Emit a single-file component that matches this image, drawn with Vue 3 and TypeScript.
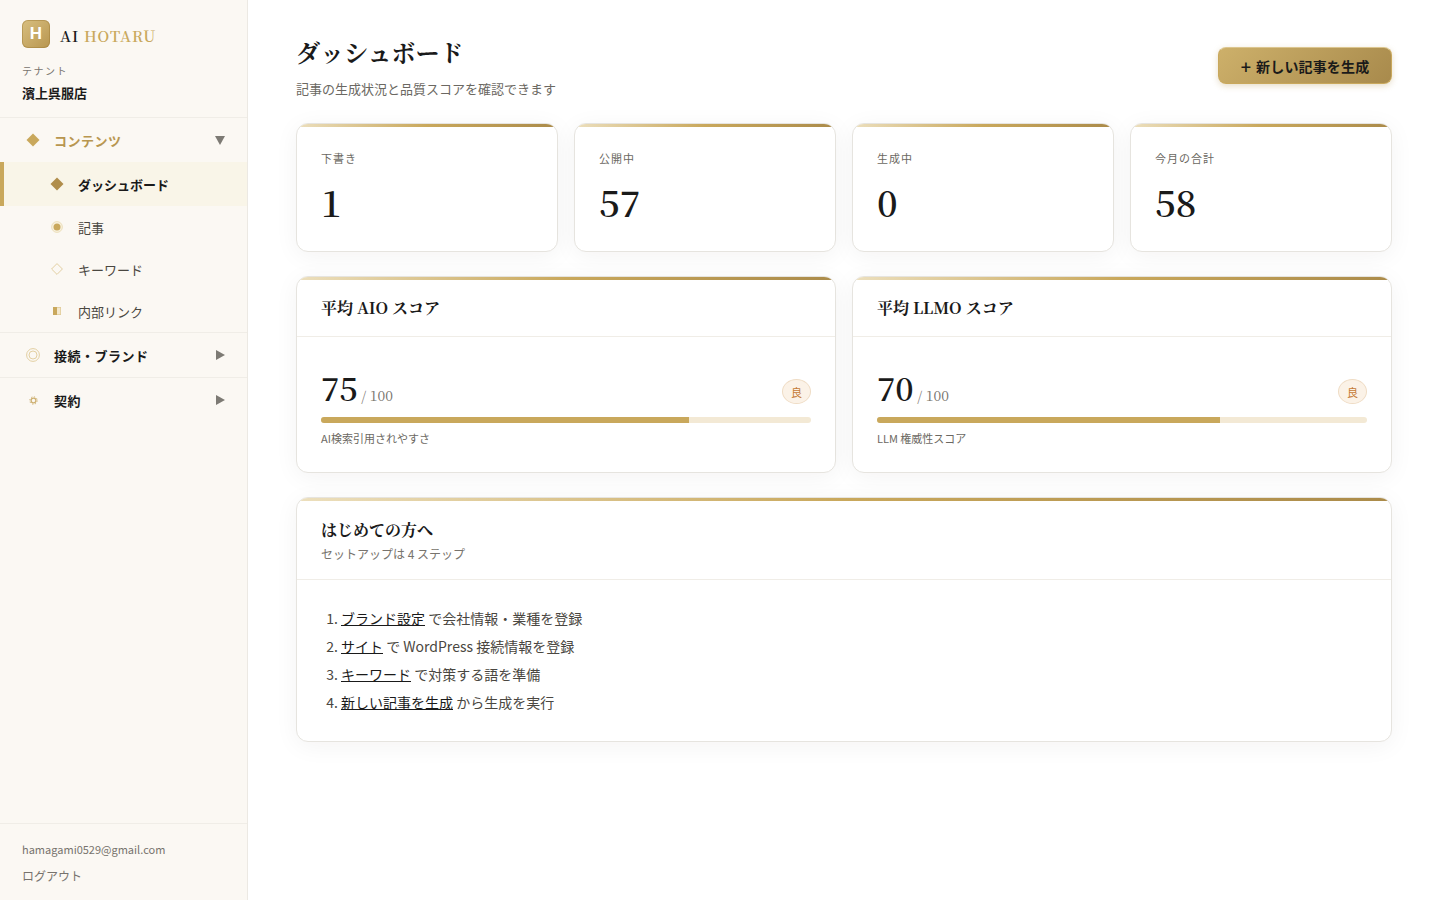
<script setup lang="ts">
const stats = [
  { label: '下書き', value: 1 },
  { label: '公開中', value: 57 },
  { label: '生成中', value: 0 },
  { label: '今月の合計', value: 58 },
]

const scores = [
  { title: '平均 AIO スコア', value: 75, note: 'AI検索引用されやすさ' },
  { title: '平均 LLMO スコア', value: 70, note: 'LLM 権威性スコア' },
]

const steps = [
  { link: 'ブランド設定', rest: ' で会社情報・業種を登録' },
  { link: 'サイト', rest: ' で WordPress 接続情報を登録' },
  { link: 'キーワード', rest: ' で対策する語を準備' },
  { link: '新しい記事を生成', rest: ' から生成を実行' },
]
</script>

<template>
  <div class="layout">
    <aside class="sidebar">
      <div class="brand-block">
        <div class="brand">
          <span class="logo">H</span>
          <span class="brand-name">AI <em>HOTARU</em></span>
        </div>
        <div class="tenant-label">テナント</div>
        <div class="tenant-name">濱上呉服店</div>
      </div>

      <nav class="nav">
        <section class="nav-group">
          <div class="group-head open">
            <span class="group-icon">
              <svg width="14" height="14" viewBox="0 0 14 14"><path d="M7 .5 13.5 7 7 13.5.5 7z" fill="#c9a85c" /></svg>
            </span>
            <span class="group-label">コンテンツ</span>
            <svg class="caret" width="10" height="9" viewBox="0 0 10 9"><path d="M0 0h10L5 9z" fill="#7d7a74" /></svg>
          </div>
          <a class="nav-item active">
            <span class="item-icon">
              <svg width="14" height="14" viewBox="0 0 14 14"><path d="M7 .5 13.5 7 7 13.5.5 7z" fill="#b08d4a" /></svg>
            </span>
            ダッシュボード
          </a>
          <a class="nav-item">
            <span class="item-icon">
              <svg width="12" height="12" viewBox="0 0 12 12"><circle cx="6" cy="6" r="5.4" fill="#f8f1de" stroke="#e8d9b0" stroke-width=".8" /><circle cx="6" cy="6" r="3.5" fill="#c9a85c" /></svg>
            </span>
            記事
          </a>
          <a class="nav-item">
            <span class="item-icon">
              <svg width="12" height="12" viewBox="0 0 12 12"><path d="M6 .6 11.4 6 6 11.4.6 6z" fill="none" stroke="#e0cb98" stroke-width=".9" /></svg>
            </span>
            キーワード
          </a>
          <a class="nav-item">
            <span class="item-icon">
              <svg width="8" height="8" viewBox="0 0 8 8"><rect x=".4" y=".4" width="7.2" height="7.2" fill="#f3e8cd" stroke="#e0cb98" stroke-width=".8" /><rect x="0" y="0" width="4" height="8" fill="#c9a85c" /></svg>
            </span>
            内部リンク
          </a>
        </section>

        <section class="nav-group">
          <div class="group-head">
            <span class="group-icon">
              <svg width="14" height="14" viewBox="0 0 14 14"><circle cx="7" cy="7" r="6.4" fill="none" stroke="#e0cb98" stroke-width=".9" /><circle cx="7" cy="7" r="4" fill="none" stroke="#e0cb98" stroke-width=".9" /></svg>
            </span>
            <span class="group-label">接続・ブランド</span>
            <svg class="caret" width="9" height="10" viewBox="0 0 9 10"><path d="M0 0l9 5-9 5z" fill="#7d7a74" /></svg>
          </div>
        </section>

        <section class="nav-group">
          <div class="group-head">
            <span class="group-icon">
              <svg width="9" height="9" viewBox="0 0 9 9"><circle cx="4.5" cy="4.5" r="2.4" fill="none" stroke="#cdb071" stroke-width="1.3" /><circle cx="4.5" cy="4.5" r="3.7" fill="none" stroke="#cdb071" stroke-width="1" stroke-dasharray="1.3 1.6" /></svg>
            </span>
            <span class="group-label">契約</span>
            <svg class="caret" width="9" height="10" viewBox="0 0 9 10"><path d="M0 0l9 5-9 5z" fill="#7d7a74" /></svg>
          </div>
        </section>
      </nav>

      <div class="user-block">
        <div class="email">hamagami0529@gmail.com</div>
        <a class="logout">ログアウト</a>
      </div>
    </aside>

    <main class="main">
      <header class="page-head">
        <div>
          <h1>ダッシュボード</h1>
          <p>記事の生成状況と品質スコアを確認できます</p>
        </div>
        <button class="primary"><span class="plus">+</span>新しい記事を生成</button>
      </header>

      <div class="stats">
        <div v-for="s in stats" :key="s.label" class="card stat">
          <div class="stat-label">{{ s.label }}</div>
          <div class="stat-value">{{ s.value }}</div>
        </div>
      </div>

      <div class="scores">
        <div v-for="s in scores" :key="s.title" class="card">
          <div class="card-head">
            <h2>{{ s.title }}</h2>
          </div>
          <div class="score-body">
            <div class="score-row">
              <div><span class="score-num">{{ s.value }}</span><span class="score-max"> / 100</span></div>
              <span class="badge">良</span>
            </div>
            <div class="bar"><div class="bar-fill" :style="{ width: s.value + '%' }"></div></div>
            <div class="score-note">{{ s.note }}</div>
          </div>
        </div>
      </div>

      <div class="card guide">
        <div class="card-head guide-head">
          <h2>はじめての方へ</h2>
          <p>セットアップは 4 ステップ</p>
        </div>
        <ol class="steps">
          <li v-for="st in steps" :key="st.link"><a>{{ st.link }}</a>{{ st.rest }}</li>
        </ol>
      </div>
    </main>
  </div>
</template>

<style>
body {
  background: #fff;
}
</style>

<style scoped>
.layout {
  display: flex;
  min-height: 900px;
  font-family: "Noto Sans CJK JP", "Noto Sans", sans-serif;
  color: #1a1a1a;
}

.sidebar {
  width: 248px;
  height: 900px;
  box-sizing: border-box;
  flex-shrink: 0;
  display: flex;
  flex-direction: column;
  background: #fbf8f3;
  border-right: 1px solid #ece9e3;
}

.brand-block {
  padding: 20px 22px 14px;
  border-bottom: 1px solid #f0ede7;
}

.brand {
  display: flex;
  align-items: center;
  gap: 10px;
}

.logo {
  width: 28px;
  height: 28px;
  border-radius: 6px;
  display: flex;
  align-items: center;
  justify-content: center;
  background: linear-gradient(135deg, #d8bf80, #b8964f);
  box-shadow: inset 0 0 0 1px rgba(160, 125, 55, 0.5);
  color: #fff;
  font-family: "Liberation Sans", sans-serif;
  font-size: 17px;
  font-weight: 700;
}

.brand-name {
  font-family: "Noto Serif CJK JP", "Liberation Serif", serif;
  font-size: 15px;
  font-weight: 600;
  letter-spacing: 1px;
  position: relative;
  top: 1px;
}

.brand-name em {
  font-style: normal;
  color: #c9a85c;
}

.tenant-label {
  margin-top: 15px;
  font-size: 10px;
  line-height: 16px;
  letter-spacing: 1.5px;
  color: #77736d;
}

.tenant-name {
  margin-top: 4px;
  font-size: 13px;
  line-height: 20px;
  font-weight: 700;
}

.nav {
  flex: 1;
}

.nav-group {
  border-bottom: 1px solid #f0ede7;
}

.nav-group:last-child {
  border-bottom: none;
}

.group-head {
  height: 44px;
  display: flex;
  align-items: center;
  padding: 0 22px 0 26px;
  font-size: 13px;
  font-weight: 700;
  letter-spacing: 0.5px;
}

.group-head.open {
  color: #b8964f;
}

.group-icon {
  width: 14px;
  display: flex;
  justify-content: center;
  margin-right: 14px;
}

.group-label {
  flex: 1;
}

.nav-item {
  height: 42px;
  display: flex;
  align-items: center;
  padding-left: 50px;
  font-size: 13px;
  color: #4a4741;
}

.nav-item.active {
  height: 44px;
  padding-left: 46px;
  border-left: 4px solid #c9a85c;
  background: #f9f5e8;
  color: #1a1a1a;
  font-weight: 700;
}

.item-icon {
  width: 14px;
  display: flex;
  justify-content: center;
  margin-right: 14px;
}

.user-block {
  padding: 14px 22px 15px;
  border-top: 1px solid #f0ede7;
}

.email {
  font-size: 11px;
  line-height: 20px;
  color: #77736d;
  position: relative;
  top: 1px;
}

.logout {
  display: block;
  margin-top: 7px;
  font-size: 12px;
  line-height: 20px;
  color: #77736d;
  position: relative;
  top: 1px;
}

.main {
  flex: 1;
  padding: 32px 48px;
}

.page-head {
  display: flex;
  justify-content: space-between;
  align-items: center;
  margin-bottom: 24px;
}

h1 {
  margin: 0;
  font-family: "Noto Serif CJK JP", "Noto Sans CJK JP", serif;
  font-size: 24px;
  line-height: 40px;
  font-weight: 700;
}

.page-head p {
  margin: 7px 0 0;
  font-size: 13px;
  line-height: 20px;
  color: #6b6862;
}

.primary {
  width: 174px;
  height: 37px;
  display: flex;
  align-items: center;
  justify-content: center;
  border: 1px solid #c9a85c;
  border-top-color: #dcc68f;
  border-radius: 8px;
  background: linear-gradient(135deg, #cdb06a, #a88a4c);
  box-shadow: 0 2px 6px rgba(176, 141, 74, 0.3);
  color: #1a1a1a;
  font-family: inherit;
  font-size: 14px;
  font-weight: 700;
  letter-spacing: 0.15px;
}

.plus {
  font-size: 18px;
  font-weight: 500;
  line-height: 1;
  margin-right: 5px;
}

.card {
  position: relative;
  overflow: hidden;
  box-sizing: border-box;
  background: #fff;
  border: 1px solid #e6e4df;
  border-radius: 12px;
  box-shadow: 0 4px 24px rgba(30, 25, 15, 0.05);
}

.card::before {
  content: "";
  position: absolute;
  left: 0;
  right: 0;
  top: 0;
  height: 3px;
  background: linear-gradient(90deg, #ecdfbd, #c9a85c 50%, #ab8b4a);
}

.stats {
  display: grid;
  grid-template-columns: repeat(4, 1fr);
  gap: 16px;
  margin-bottom: 24px;
}

.stat {
  height: 129px;
  padding: 25px 24px 0;
}

.stat-label {
  font-size: 11px;
  line-height: 18px;
  letter-spacing: 1px;
  color: #6b6862;
}

.stat-value {
  margin-top: 12px;
  font-family: "Noto Serif CJK JP", "Liberation Serif", serif;
  font-size: 36px;
  line-height: 46px;
  font-weight: 600;
}

.scores {
  display: grid;
  grid-template-columns: 1fr 1fr;
  gap: 16px;
  margin-bottom: 24px;
}

.card-head {
  padding: 18px 24px 15px;
  border-bottom: 1px solid #f0ede7;
}

h2 {
  margin: 0;
  font-family: "Noto Serif CJK JP", "Noto Sans CJK JP", serif;
  font-size: 16px;
  line-height: 26px;
  font-weight: 700;
}

.score-body {
  padding: 30px 24px 25px;
}

.score-row {
  display: flex;
  justify-content: space-between;
  align-items: flex-end;
}

.score-num {
  font-family: "Noto Serif CJK JP", "Liberation Serif", serif;
  font-size: 32px;
  line-height: 40px;
  font-weight: 600;
}

.score-max {
  font-family: "Noto Serif CJK JP", "Liberation Serif", serif;
  font-size: 14px;
  color: #77736d;
}

.badge {
  width: 29px;
  height: 25px;
  display: flex;
  align-items: center;
  justify-content: center;
  margin-bottom: 3px;
  box-sizing: border-box;
  border: 1px solid #efdcc5;
  border-radius: 50%;
  background: #fbf2e7;
  color: #c57a35;
  font-size: 11px;
}

.bar {
  height: 6px;
  margin-top: 10px;
  border-radius: 3px;
  overflow: hidden;
  background: #f3e9d5;
}

.bar-fill {
  height: 100%;
  background: #c9a85c;
}

.score-note {
  margin-top: 6px;
  font-size: 11px;
  line-height: 18px;
  color: #6b6862;
}

.guide-head {
  padding-top: 19px;
  padding-bottom: 15px;
}

.guide-head p {
  margin: 1px 0 0;
  font-size: 12px;
  line-height: 20px;
  color: #77736d;
}

.steps {
  margin: 0;
  padding: 24px 24px 25px 44px;
  font-size: 14px;
  line-height: 28px;
  color: #4a4741;
}

.steps a {
  color: #1a1a1a;
  text-decoration: underline;
}
</style>
